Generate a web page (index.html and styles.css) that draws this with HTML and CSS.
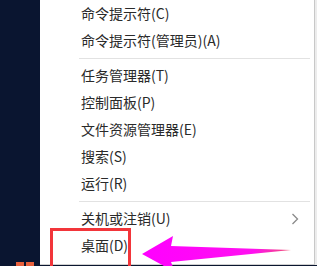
FILE: index.html
```html
<!DOCTYPE html>
<html lang="zh">
<head>
<meta charset="utf-8">
<link rel="stylesheet" href="styles.css">
</head>
<body>
<div class="screen">
  <div class="desktop">
    <div class="start-btn"><span></span><span></span></div>
  </div>
  <div class="menu">
    <div class="item">命令提示符(C)</div>
    <div class="item">命令提示符(管理员)(A)</div>
    <div class="sep"></div>
    <div class="item">任务管理器(T)</div>
    <div class="item">控制面板(P)</div>
    <div class="item">文件资源管理器(E)</div>
    <div class="item">搜索(S)</div>
    <div class="item">运行(R)</div>
    <div class="sep"></div>
    <div class="item">关机或注销(U)
      <svg class="chev" width="8" height="12" viewBox="0 0 8 12"><path d="M1.5 1 L6.5 6 L1.5 11" fill="none" stroke="#8a8a8a" stroke-width="1.3"/></svg>
    </div>
    <div class="item">桌面(D)</div>
  </div>
  <div class="highlight"></div>
  <svg class="arrow" width="160" height="40" viewBox="0 0 160 40">
    <defs>
      <linearGradient id="g" x1="0" y1="0" x2="1" y2="0">
        <stop offset="0" stop-color="#ff00ff"/>
        <stop offset="0.75" stop-color="#ff10f0"/>
        <stop offset="1" stop-color="#f05070"/>
      </linearGradient>
    </defs>
    <polygon points="2,26 33,8 31,18 151,22 31,34 35,44" fill="url(#g)"/>
  </svg>
</div>
</body>
</html>
```
FILE: styles.css
```css
html, body {
  margin: 0;
  padding: 0;
}
body {
  width: 317px;
  height: 266px;
  overflow: hidden;
  background: #0b1730;
  font-family: "Noto Sans CJK SC", "Noto Sans", sans-serif;
}
.screen {
  position: relative;
  display: flex;
  width: 317px;
  height: 266px;
}
.desktop {
  width: 40px;
  flex: none;
  background: #0a1530;
  display: flex;
  align-items: flex-end;
  justify-content: flex-start;
}
.start-btn {
  display: flex;
  gap: 2px;
  margin: 0 0 0 16px;
  height: 4px;
}
.start-btn span {
  width: 8px;
  height: 4px;
  background: #e8603c;
}
.menu {
  flex: 1;
  background: #ffffff;
  border-right: 1px solid #c8c8c8;
  border-bottom: 1px solid #d0d0d0;
  box-shadow: 2px 0 0 #ececec;
  margin-right: 2px;
  height: 264px;
  padding-left: 41px;
  display: flex;
  flex-direction: column;
}
.item {
  height: 27px;
  line-height: 27px;
  font-size: 14px;
  color: #2a2a2a;
  display: flex;
  align-items: center;
  position: relative;
}
.chev {
  margin-left: auto;
  margin-right: 15px;
}
.sep {
  height: 1px;
  background: #e2e2e2;
  margin: 4px 4px 3px -2px;
}
.highlight {
  position: absolute;
  left: 50px;
  top: 228px;
  width: 75px;
  height: 45px;
  border: 3px solid #f2353a;
}
.arrow {
  position: absolute;
  left: 140px;
  top: 228px;
}
```
